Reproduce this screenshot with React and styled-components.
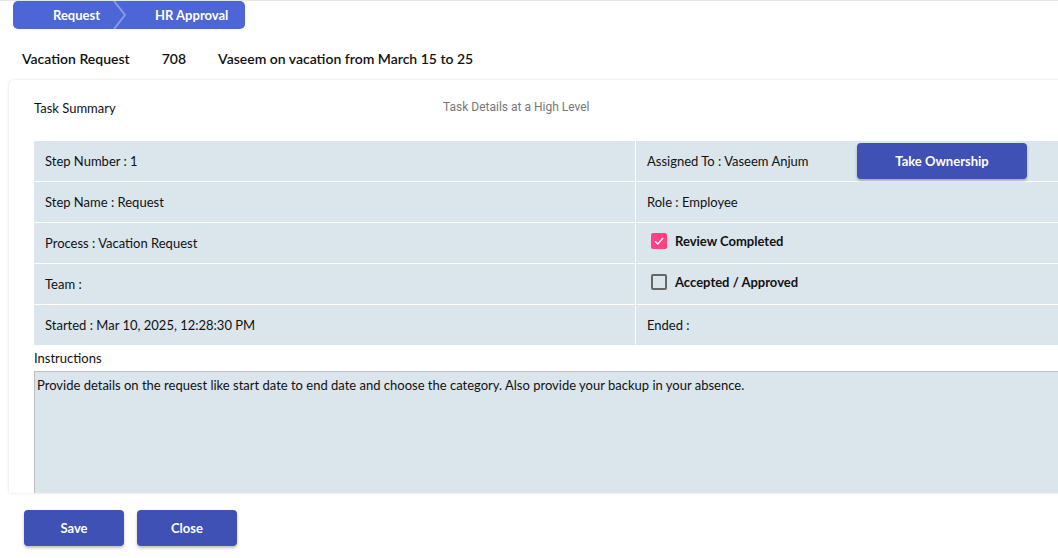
import styled, { createGlobalStyle } from "styled-components";

const GlobalStyle = createGlobalStyle`
  html, body {
    margin: 0;
    padding: 0;
    background: #ffffff;
    overflow: hidden;
  }
  body {
    font-family: "Lato", "Noto Sans", sans-serif;
    color: #111;
  }
`;

const Page = styled.div`
  width: 1058px;
  height: 558px;
  overflow: hidden;
  border-top: 1px solid #e6e6e6;
  box-sizing: border-box;
`;

const Breadcrumb = styled.div`
  display: flex;
  align-items: center;
  margin-left: 13px;
  width: 232px;
  height: 28px;
  background: #4c66d5;
  border-radius: 5px;
  color: #fff;
  font-size: 13px;
  font-weight: 700;
`;

const Step = styled.div`
  display: flex;
  align-items: center;
  width: ${(p) => p.$width}px;
  padding-left: ${(p) => p.$pad || 0}px;
  box-sizing: border-box;
  height: 100%;
`;

const Chevron = () => (
  <svg width="14" height="28" viewBox="0 0 14 28">
    <path d="M1 0 L12 14 L1 28" fill="none" stroke="rgba(255,255,255,0.35)" strokeWidth="2" />
  </svg>
);

const HeaderRow = styled.div`
  display: flex;
  gap: 32px;
  padding: 19px 22px 0;
  height: 21px;
  font-size: 14px;
  color: #111;
  line-height: 21px;
`;

const HeaderText = styled.span`
  font-weight: 600;
`;

const Card = styled.div`
  margin: 11px -40px 0 9px;
  height: 413px;
  padding-left: 25px;
  background: #fff;
  border-top-left-radius: 5px;
  box-shadow: 0 0 3px rgba(0, 0, 0, 0.14);
  display: flex;
  flex-direction: column;
`;

const SummaryRow = styled.div`
  display: flex;
  align-items: center;
  height: 61px;
  padding-bottom: 6px;
  box-sizing: border-box;
`;

const SummaryTitle = styled.div`
  width: 409px;
  font-size: 13px;
  color: #111;
`;

const SummarySub = styled.div`
  font-family: "Roboto", sans-serif;
  font-size: 12px;
  color: #777;
  margin-top: -2px;
`;

const Table = styled.div`
  display: grid;
  grid-template-columns: 601px 1fr;
  grid-auto-rows: 40px;
  gap: 1px;
  background: #fff;
`;

const Cell = styled.div`
  display: flex;
  align-items: center;
  background: #dae5ec;
  padding-left: ${(p) => (p.$check ? 15 : 11)}px;
  font-size: 13px;
  color: #111;
`;

const AssignedLabel = styled.span`
  width: 210px;
`;

const Button = styled.button`
  width: ${(p) => p.$width || 100}px;
  height: 36px;
  background: #3f51b5;
  color: #fff;
  border: none;
  border-radius: 4px;
  font-family: "Lato", "Noto Sans", sans-serif;
  font-size: 13px;
  font-weight: 700;
  box-shadow: 0 2px 3px rgba(0, 0, 0, 0.25);
  cursor: pointer;
`;

const CheckLabel = styled.label`
  display: flex;
  align-items: center;
  gap: 8px;
  font-weight: 700;
  font-size: 13px;
  margin-top: -4px;
`;

const Box = styled.span`
  width: 16px;
  height: 16px;
  box-sizing: border-box;
  border-radius: 2px;
  display: flex;
  align-items: center;
  justify-content: center;
  background: ${(p) => (p.$checked ? "#ff4081" : "transparent")};
  border: ${(p) => (p.$checked ? "none" : "2px solid #666")};
`;

const Checkbox = ({ checked, label }) => (
  <CheckLabel>
    <Box $checked={checked}>
      {checked && (
        <svg width="12" height="12" viewBox="0 0 12 12">
          <path d="M2 6.2 L4.8 9 L10 3" fill="none" stroke="#fff" strokeWidth="1.4" />
        </svg>
      )}
    </Box>
    {label}
  </CheckLabel>
);

const InstructionsLabel = styled.div`
  height: 26px;
  display: flex;
  align-items: center;
  font-size: 13px;
  color: #111;
`;

const Instructions = styled.div`
  flex: 1;
  background: #dae5ec;
  border-top: 1px solid #bdbdbd;
  border-left: 1px solid #bdbdbd;
  padding: 5px 2px;
  font-size: 13px;
  color: #111;
  line-height: 16px;
`;

const Footer = styled.div`
  display: flex;
  gap: 13px;
  padding: 17px 0 0 24px;
`;

export default function App() {
  return (
    <Page>
      <GlobalStyle />
      <Breadcrumb>
        <Step $width={100} $pad={40}>Request</Step>
        <Chevron />
        <Step $width={118} $pad={28}>HR Approval</Step>
      </Breadcrumb>
      <HeaderRow>
        <HeaderText>Vacation Request</HeaderText>
        <HeaderText>708</HeaderText>
        <HeaderText>Vaseem on vacation from March 15 to 25</HeaderText>
      </HeaderRow>
      <Card>
        <SummaryRow>
          <SummaryTitle>Task Summary</SummaryTitle>
          <SummarySub>Task Details at a High Level</SummarySub>
        </SummaryRow>
        <Table>
          <Cell>Step Number : 1</Cell>
          <Cell>
            <AssignedLabel>Assigned To : Vaseem Anjum</AssignedLabel>
            <Button $width={170}>Take Ownership</Button>
          </Cell>
          <Cell>Step Name : Request</Cell>
          <Cell>Role : Employee</Cell>
          <Cell>Process : Vacation Request</Cell>
          <Cell $check>
            <Checkbox checked label="Review Completed" />
          </Cell>
          <Cell>Team :</Cell>
          <Cell $check>
            <Checkbox label="Accepted / Approved" />
          </Cell>
          <Cell>Started : Mar 10, 2025, 12:28:30 PM</Cell>
          <Cell>Ended :</Cell>
        </Table>
        <InstructionsLabel>Instructions</InstructionsLabel>
        <Instructions>
          Provide details on the request like start date to end date and choose the category. Also provide your backup in your absence.
        </Instructions>
      </Card>
      <Footer>
        <Button>Save</Button>
        <Button>Close</Button>
      </Footer>
    </Page>
  );
}
